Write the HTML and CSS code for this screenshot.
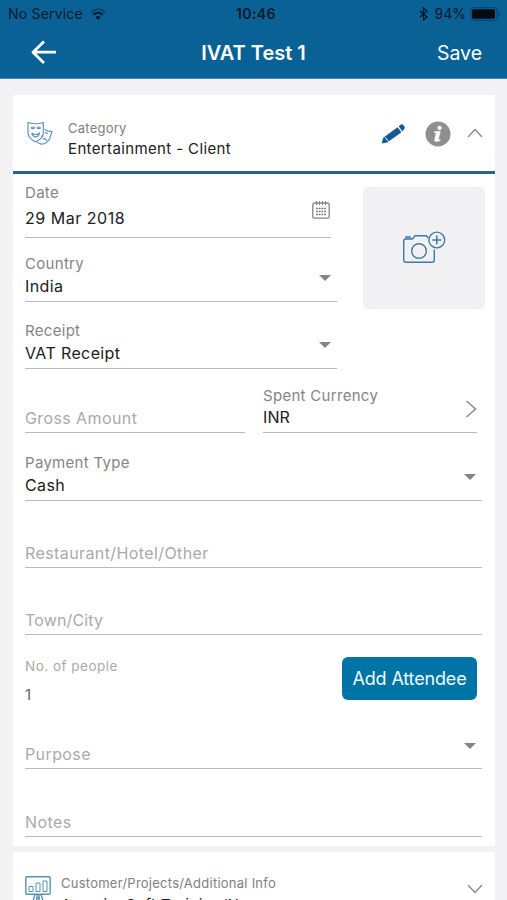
FILE: index.html
```
<!DOCTYPE html>
<html lang="en">
<head>
<meta charset="utf-8">
<title>IVAT Test 1</title>
<link rel="stylesheet" href="styles.css">
</head>
<body>
<header class="top">
  <div class="status">
    <div class="status-left"><span class="carrier">No Service</span>
      <svg class="wifi" width="16" height="12" viewBox="0 0 16 12"><g fill="none" stroke="#06192a" stroke-width="2"><path d="M1 4.2Q8-1.8 15 4.2" opacity=".4"/><path d="M3.3 6.8Q8 2.8 12.7 6.8"/></g><path d="M5.3 8.9Q8 6.9 10.7 8.9L8 11.7z" fill="#06192a"/></svg>
    </div>
    <span class="clock">10:46</span>
    <div class="status-right">
      <svg width="9" height="14" viewBox="0 0 9 14"><path d="M1 4l7 6-3.5 3V1L8 4l-7 6" fill="none" stroke="#06192a" stroke-width="1.3"/></svg>
      <span class="percent">94%</span>
      <svg class="battery" width="31" height="14" viewBox="0 0 31 14"><rect x=".7" y=".7" width="26.6" height="12.6" rx="3" fill="none" stroke="#06406b"/><rect x="2" y="2.2" width="23" height="9.6" rx="1.5" fill="#020a12"/><path d="M29 4.5q2 2.5 0 5z" fill="#06406b"/></svg>
    </div>
  </div>
  <nav class="bar">
    <svg class="back" width="26" height="26" viewBox="0 0 26 26"><path d="M13 1.5L2 12.2 13 23M2 12.2h23" fill="none" stroke="#fff" stroke-width="2.8" stroke-linejoin="round"/></svg>
    <h1 class="title">IVAT Test 1</h1>
    <span class="save">Save</span>
  </nav>
</header>
<main class="page">
  <section class="card main-card">
    <div class="card-head">
      <svg class="masks" width="26" height="25" viewBox="0 0 26 25"><g fill="none" stroke="#5c94ba" stroke-width="1.2" stroke-linejoin="round"><path d="M1 1.5q8 2.500 15.300 0v11q-1 5.500-7.600 8.200Q1.700 18 1 12z"/><path d="M4 7q1.800-2 3.600 0q-1.800 1.200-3.600 0M9.800 7q1.800-2 3.600 0q-1.800 1.200-3.600 0M4.600 12q4 3 8 0q-1.200 3.800-4 3.800T4.600 12"/><path d="M17.500 8.500q3.500 2.300 7.500 1.900l-2.300 7.400q-3.400 5.600-8.500 5.400q-2.400-.4-4.500-2.500"/><path d="M18 11.700q2-.5 2.800 1.400M15.500 18q2.500-1.500 4.500 1.700M14 15l2.500.2"/></g></svg>
      <div class="head-text"><span class="head-label">Category</span><span class="head-value">Entertainment - Client</span></div>
      <svg class="pencil" width="24" height="22" viewBox="0 0 24 22"><path d="M.7 20.500L2.200 14.800 16.600 4.200 20.500 9.200 6.300 19.600z" fill="#145b91"/><path d="M17.700 3.300L20 1.600Q21.300.8 22.500 2.200L23.500 3.700Q24.300 5 23 6.300L21.400 8.400z" fill="#145b91"/><path d="M4.200 14.300l3.400 4.400" stroke="#fff"/></svg>
      <svg class="info" width="26" height="26" viewBox="0 0 26 26"><circle cx="13" cy="13" r="12.500" fill="#8f8f8f"/><circle cx="14.500" cy="6.900" r="2.100" fill="#fff"/><path d="M9.600 10.400h5.700l-2 8.200q0 .7 2-.3l-.4 1.300q-5.700 2.300-5.300-.8l1.500-6.500q0-.7-1.800-.7z" fill="#fff" stroke="#fff" stroke-width=".5"/></svg>
      <svg class="chev" width="16" height="10" viewBox="0 0 16 10"><path d="M1 9l7-7.500L15 9" fill="none" stroke="#858585" stroke-width="1.200"/></svg>
    </div>
    <div class="form">
      <div class="upper">
        <div class="column">
          <div class="field date"><span class="label">Date</span><span class="value date-value">29 Mar 2018</span>
            <svg class="calendar" width="18" height="18" viewBox="0 0 18 18"><rect x=".8" y="2" width="16.400" height="15.200" rx="1.800" fill="none" stroke="#858585" stroke-width="1.300"/><path d="M4.500 0v4M7.500 0v4M10.500 0v4M13.500 0v4" stroke="#858585"/><path d="M4 7.500h10M4 10.500h10M4 13.500h10" stroke="#757575" stroke-width="1.700" stroke-dasharray="1.800 .933"/></svg>
          </div>
          <div class="field country"><span class="label">Country</span><span class="value">India</span><i class="arrow"></i></div>
          <div class="field receipt"><span class="label">Receipt</span><span class="value">VAT Receipt</span><i class="arrow"></i></div>
        </div>
        <div class="photo">
          <svg width="44" height="34" viewBox="0 0 44 34"><g fill="none" stroke="#3f79a7" stroke-width="1.400"><path d="M26 7l-1.500-2.300H13L10.500 8H4Q1.700 8 1.700 10.500V29Q1.700 31.300 4 31.300H30Q32.300 31.300 32.300 29V18.500"/><path d="M4 7.500V6h4v1.500"/><circle cx="17" cy="20" r="7.300"/><circle cx="34.800" cy="9" r="7.900"/><path d="M34.800 4.500v9M30.300 9h9" stroke-width="1.500"/></g></svg>
        </div>
      </div>
      <div class="money">
        <div class="field"><span class="placeholder">Gross Amount</span></div>
        <div class="field"><span class="label currency-label">Spent Currency</span><span class="value currency">INR</span>
          <svg class="next" width="12" height="18" viewBox="0 0 12 18"><path d="M1.500 1L10.500 9l-9 8" fill="none" stroke="#888" stroke-width="1.500"/></svg></div>
      </div>
      <div class="field payment"><span class="label">Payment Type</span><span class="value">Cash</span><i class="arrow"></i></div>
      <div class="field"><span class="placeholder">Restaurant/Hotel/Other</span></div>
      <div class="field"><span class="placeholder town">Town/City</span></div>
      <div class="people">
        <div class="people-text"><span class="people-label">No. of people</span><span class="people-value">1</span></div>
        <button class="attendee">Add Attendee</button>
      </div>
      <div class="field purpose"><span class="placeholder">Purpose</span><i class="arrow"></i></div>
      <div class="field notes"><span class="placeholder">Notes</span></div>
    </div>
  </section>
  <section class="card next-card">
    <svg class="board" width="26" height="30" viewBox="0 0 26 30"><g fill="none" stroke="#5992b8" stroke-width="1.400"><rect x=".8" y=".8" width="24.400" height="17.400" rx="1"/><path d="M4 15.500v-5h4v5zM11 15.500V7h4v8.500zM18 15.500V5h4v10.500z" stroke-width="1"/><path d="M10 18.500L6.500 29M12 18.500v7M14 18.500v7M16 18.500L19.500 29M11 22h4"/></g></svg>
    <div class="head-text"><span class="head-label project-label">Customer/Projects/Additional Info</span><span class="head-value project-value">Acemia, Soft Training/New</span></div>
    <svg class="chev-down" width="16" height="10" viewBox="0 0 16 10"><path d="M1 1l7 7.500L15 1" fill="none" stroke="#858585" stroke-width="1.300"/></svg>
  </section>
</main>
</body>
</html>
```
FILE: styles.css
```
* { box-sizing: border-box; }
body { margin: 0; height: 900px; overflow: hidden; background: #f2f2f4; font-family: Inter, "Liberation Sans", sans-serif; color: #202020; }
svg { display: block; flex: none; }
span { white-space: nowrap; }
.top { height: 79px; background: #0a6196; border-bottom: 1px solid #4288b0; }
.status { display: grid; grid-template-columns: 1fr auto 1fr; align-items: center; height: 27px; padding: 0 6px 0 8px; color: #06192a; font-size: 14px; line-height: 20px; }
.status-left, .status-right { display: flex; align-items: center; }
.status-left { gap: 7px; }
.carrier { letter-spacing: .2px; }
.status-right { justify-content: flex-end; gap: 7px; }
.battery { margin-left: -3px; }
.clock { padding-left: 3px; font-weight: 600; letter-spacing: .4px; }
.bar { display: grid; grid-template-columns: 1fr auto 1fr; align-items: center; height: 51px; padding: 0 25px; color: #fff; }
.back { margin-left: 6px; }
.title { margin: 0; font-size: 20px; line-height: 24px; font-weight: 600; }
.save { justify-self: end; font-size: 19.5px; line-height: 24px; }
.page { padding: 16px 12px 0 13px; }
.card { background: #fff; }
.main-card { height: 751px; }
.card-head { display: flex; align-items: center; height: 79px; padding: 0 12px 0 14px; border-bottom: 3px solid #1f6794; }
.head-text { display: flex; flex: 1; flex-direction: column; }
.card-head .head-text { margin: 12px 0 0 15px; }
.head-label { font-size: 13px; line-height: 18px; letter-spacing: .25px; color: #808080; }
.head-value { font-size: 15px; line-height: 23px; letter-spacing: .37px; }
.pencil { margin-top: 1px; }
.info { margin: 2px 0 0 20px; }
.chev { margin-left: 16px; }
.form { padding-left: 12px; }
.upper { display: flex; justify-content: space-between; padding-right: 10px; }
.column { width: 312px; }
.field { position: relative; display: flex; flex-direction: column; justify-content: flex-end; height: 67px; width: 457px; padding-bottom: 4px; border-bottom: 1px solid #bababa; }
.label { font-size: 15px; line-height: 22px; letter-spacing: .3px; color: #858585; }
.currency-label { line-height: 20px; }
.value { font-size: 16px; line-height: 22px; letter-spacing: .38px; }
.value.currency { letter-spacing: .1px; }
.placeholder { font-size: 16px; line-height: 20px; letter-spacing: .4px; color: #aaa; }
.placeholder.town { letter-spacing: .15px; }
.column .field { width: 100%; }
.column .date { width: 306px; height: 64px; padding-bottom: 8px; }
.date-value { margin-top: 3px; letter-spacing: .52px; }
.country { height: 64px; }
.calendar { position: absolute; right: 1px; top: 27px; }
.arrow { position: absolute; right: 6px; bottom: 20px; border: solid transparent; border-width: 6px 6px 0; border-top-color: #858585; }
.photo { display: flex; align-items: center; justify-content: center; width: 122px; height: 122px; margin-top: 13px; border-radius: 6px; background: #f1f1f3; }
.money { display: grid; grid-template-columns: 220px 214px; column-gap: 18px; }
.money .field { width: auto; height: 64px; }
.next { position: absolute; right: 0; bottom: 14px; }
.payment { height: 68px; }
.people { display: flex; justify-content: space-between; width: 452px; height: 67px; padding-top: 22px; }
.people-text { display: flex; flex-direction: column; }
.people-label { margin-top: -1px; font-size: 13.5px; line-height: 20px; letter-spacing: .5px; color: #aaa; }
.people-value { margin-top: 8px; font-size: 15px; line-height: 22px; color: #666; }
.attendee { width: 135px; height: 43px; padding: 0; border: 0; border-radius: 6px; background: #0074a6; color: #eefaff; font: 400 18px/22px Inter, "Liberation Sans", sans-serif; letter-spacing: -.15px; }
.payment .arrow, .purpose .arrow { right: 6px; }
.purpose .arrow { bottom: 19px; }
.notes { height: 68px; }
.next-card { display: flex; height: 70px; margin-top: 6px; padding: 22px 12px 0; }
.board { margin-top: 2px; }
.next-card .head-text { margin-left: 10px; }
.project-value { line-height: 25px; letter-spacing: .45px; }
.chev-down { margin-top: 10px; }
```
